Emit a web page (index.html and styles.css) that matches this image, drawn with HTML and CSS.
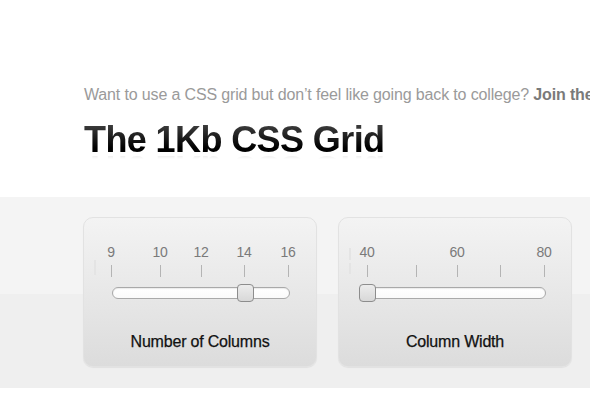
FILE: index.html
```html
<!DOCTYPE html>
<html>
<head>
<meta charset="utf-8">
<link rel="stylesheet" href="styles.css">
</head>
<body>
<header class="intro">
  <p class="lede">Want to use a CSS grid but don’t feel like going back to college? <b>Join the club.</b></p>
  <h1 class="title">The 1Kb CSS Grid</h1>
</header>
<section class="band">
  <div class="panel panel-cols">
    <span class="ghost ghost-a"></span>
    <div class="scale">
      <div class="mark"><span class="num">9</span><i class="tick"></i></div>
      <div class="mark"><span class="num">10</span><i class="tick"></i></div>
      <div class="mark"><span class="num">12</span><i class="tick"></i></div>
      <div class="mark"><span class="num">14</span><i class="tick"></i></div>
      <div class="mark"><span class="num">16</span><i class="tick"></i></div>
    </div>
    <div class="track track-cols"><span class="thumb thumb-cols"></span></div>
    <div class="caption">Number of Columns</div>
  </div>
  <div class="panel panel-width">
    <span class="ghost ghost-b"></span>
    <span class="ghost ghost-c"></span>
    <div class="scale">
      <div class="mark"><span class="num">40</span><i class="tick"></i></div>
      <div class="mark"><span class="num"></span><i class="tick"></i></div>
      <div class="mark"><span class="num">60</span><i class="tick"></i></div>
      <div class="mark"><span class="num"></span><i class="tick"></i></div>
      <div class="mark"><span class="num">80</span><i class="tick"></i></div>
    </div>
    <div class="track track-width"><span class="thumb thumb-width"></span></div>
    <div class="caption">Column Width</div>
  </div>
</section>
</body>
</html>
```
FILE: styles.css
```css
html, body {
  margin: 0;
  padding: 0;
  background: #ffffff;
  overflow: hidden;
}
body {
  width: 590px;
  height: 420px;
  font-family: "Liberation Sans", Arial, sans-serif;
}
.intro {
  padding: 86px 0 0 84px;
  height: 197px;
  box-sizing: border-box;
  white-space: nowrap;
  overflow: hidden;
}
.lede {
  margin: 0;
  font-size: 16px;
  line-height: 18px;
  color: #9a9a9a;
  letter-spacing: -0.15px;
}
.lede b {
  color: #7a7a7a;
}
.title {
  margin: 16px 0 0 0;
  font-size: 36px;
  line-height: 40px;
  font-weight: bold;
  letter-spacing: -0.6px;
  color: #111;
  display: inline-block;
  background: linear-gradient(#4a4a4a, #000 70%);
  -webkit-background-clip: text;
  background-clip: text;
  -webkit-text-fill-color: transparent;
  -webkit-box-reflect: below -12px linear-gradient(transparent 72%, rgba(255,255,255,0.22));
}
.band {
  height: 191px;
  box-sizing: border-box;
  padding: 20px 0 0 83px;
  display: flex;
  gap: 21px;
  background: linear-gradient(#f4f4f4 0, #f4f4f4 97px, #efefef 97px, #efefef 100%);
}
.panel {
  position: relative;
  width: 234px;
  height: 150px;
  box-sizing: border-box;
  border: 1px solid #e2e2e2;
  border-radius: 10px;
  background: linear-gradient(#f3f3f3, #e9e9e9 45%, #dcdcdc);
  box-shadow: 0 1px 1px rgba(0,0,0,0.06);
  padding-top: 26px;
}
.scale {
  display: grid;
  grid-template-columns: 49px 41px 43px 44px 1px;
  padding-left: 27px;
}
.panel-width .scale {
  padding-left: 28px;
}
.mark {
  display: flex;
  flex-direction: column;
  width: 0;
  align-items: center;
}
.num {
  height: 16px;
  font-size: 14px;
  line-height: 16px;
  color: #7a7a7a;
  white-space: nowrap;
  letter-spacing: -0.3px;
}
.tick {
  display: block;
  width: 1px;
  height: 12px;
  margin-top: 5px;
  background: #b4b4b4;
}
.ghost {
  position: absolute;
  width: 2px;
  background: #e4e4e4;
}
.ghost-a { left: 10px; top: 42px; height: 15px; }
.ghost-b { left: 10px; top: 30px; height: 12px; }
.ghost-c { left: 10px; top: 45px; height: 11px; }
.track {
  position: relative;
  height: 12px;
  box-sizing: border-box;
  margin-top: 10px;
  border: 1px solid #a9a9a9;
  border-radius: 6px;
  background: linear-gradient(#ffffff, #fafafa);
  box-shadow: inset 0 1px 1px rgba(0,0,0,0.08);
}
.track-cols {
  margin-left: 28px;
  width: 178px;
}
.track-width {
  margin-left: 21px;
  width: 186px;
}
.thumb {
  position: absolute;
  top: -4px;
  width: 17px;
  height: 18px;
  box-sizing: border-box;
  border: 1px solid #8d8d8d;
  border-radius: 4px;
  background: linear-gradient(#ececec, #d8d8d8);
}
.thumb-cols { left: 124px; }
.thumb-width { left: -2px; }
.caption {
  margin-top: 34px;
  text-align: center;
  font-size: 16px;
  line-height: 18px;
  color: #111;
  letter-spacing: -0.2px;
  -webkit-text-stroke: 0.25px #111;
}
```
